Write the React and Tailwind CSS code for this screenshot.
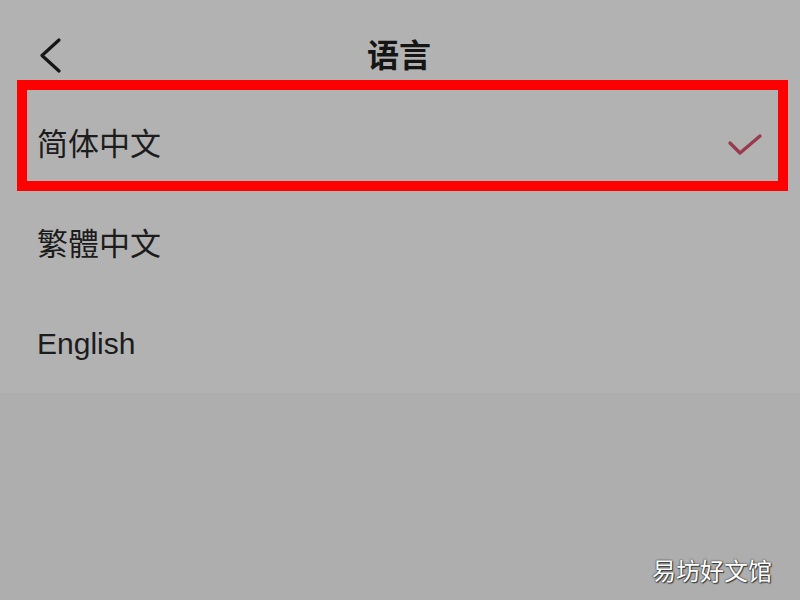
import React from "react";

const cjk = "font-['Liberation_Sans','Noto_Sans_CJK_SC',sans-serif]";

function BackChevron() {
  return (
    <svg width="24" height="36" viewBox="0 0 24 36" fill="none">
      <polyline
        points="20,2 3,17.5 20,33"
        stroke="#161616"
        strokeWidth="3.2"
        strokeLinecap="round"
        strokeLinejoin="round"
      />
    </svg>
  );
}

function Check() {
  return (
    <svg width="38" height="26" viewBox="0 0 38 26" fill="none">
      <polyline
        points="4,11 14,21 34,4"
        stroke="#9a3a4f"
        strokeWidth="3.4"
        strokeLinecap="round"
        strokeLinejoin="round"
      />
    </svg>
  );
}

const languages = [
  { label: "繁體中文", size: "text-[31px]" },
  { label: "English", size: "text-[30px]" },
];

export default function App() {
  return (
    <div className={`relative flex h-[600px] w-[800px] flex-col overflow-hidden bg-[#aeaeae] ${cjk}`}>
      <div className="flex h-[393px] flex-col bg-[#b2b2b2]">
        {/* header */}
        <div className="grid h-[80px] grid-cols-3 items-center pt-[32px]">
          <div className="flex items-center pl-[39px]">
            <BackChevron />
          </div>
          <div className="justify-self-center pr-[2px] text-[32px] font-bold leading-none text-[#151515]">
            语言
          </div>
          <div />
        </div>

        {/* selected row */}
        <div className="ml-[17px] mr-[12px] flex h-[112px] items-center justify-between border-[10px] border-[#ff0000] pt-[19px] pl-[10px] pr-[14px]">
          <span className="text-[31px] leading-none text-[#1c1c1c]">简体中文</span>
          <Check />
        </div>

        <div className="mt-[4px] flex flex-col">
          {languages.map((l) => (
            <div key={l.label} className="flex h-[99px] items-center pl-[37px]">
              <span className={`${l.size} leading-none text-[#1c1c1c]`}>{l.label}</span>
            </div>
          ))}
        </div>
      </div>

      {/* site watermark */}
      <div className="absolute bottom-[16px] right-[28px] text-[24px] leading-none text-white [text-shadow:0_0_2px_#3a3a3a,0_0_1px_#3a3a3a,1px_1px_1px_#3a3a3a]">
        易坊好文馆
      </div>
    </div>
  );
}
